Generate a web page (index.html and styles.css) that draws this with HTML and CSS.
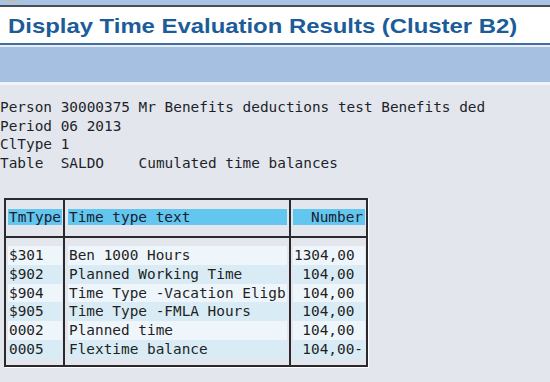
FILE: index.html
```html
<!DOCTYPE html>
<html>
<head>
<meta charset="utf-8">
<link rel="stylesheet" href="styles.css">
</head>
<body>
<div class="topband"><span class="mark"></span></div>
<div class="darkline"></div>
<div class="titlebar"><h1 class="title">Display Time Evaluation Results (Cluster B2)</h1></div>
<div class="blueline"></div>
<div class="whiteline"></div>
<div class="toolbar"></div>
<div class="lightline"></div>
<div class="content">
  <div class="info">
    <div class="line">Person 30000375 Mr Benefits deductions test Benefits ded</div>
    <div class="line">Period 06 2013</div>
    <div class="line">ClType 1</div>
    <div class="line">Table  SALDO    Cumulated time balances</div>
  </div>
  <div class="tbl">
    <div class="col col1">
      <div class="head"><span class="hl">TmType</span></div>
      <div class="body">
        <div class="cell odd">$301</div>
        <div class="cell even">$902</div>
        <div class="cell odd">$904</div>
        <div class="cell even">$905</div>
        <div class="cell odd">0002</div>
        <div class="cell even">0005</div>
      </div>
    </div>
    <div class="col col2">
      <div class="head"><span class="hl">Time type text</span></div>
      <div class="body">
        <div class="cell odd">Ben 1000 Hours</div>
        <div class="cell even">Planned Working Time</div>
        <div class="cell odd">Time Type -Vacation Eligb</div>
        <div class="cell even">Time Type -FMLA Hours</div>
        <div class="cell odd">Planned time</div>
        <div class="cell even">Flextime balance</div>
      </div>
    </div>
    <div class="col col3">
      <div class="head"><span class="hl num">Number</span></div>
      <div class="body">
        <div class="cell odd num">1304,00 </div>
        <div class="cell even num">104,00 </div>
        <div class="cell odd num">104,00 </div>
        <div class="cell even num">104,00 </div>
        <div class="cell odd num">104,00 </div>
        <div class="cell even num">104,00-</div>
      </div>
    </div>
  </div>
</div>
</body>
</html>
```

FILE: styles.css
```css
* { box-sizing: border-box; }
html, body {
  margin: 0;
  padding: 0;
  width: 550px;
  height: 382px;
  overflow: hidden;
  background: #e3e7ed;
}
.topband {
  height: 5px;
  background: #a9c3e4;
  position: relative;
}
.mark {
  position: absolute;
  left: 5px;
  top: 0;
  width: 13px;
  height: 1px;
  background: #d6b48f;
}
.darkline {
  height: 2px;
  background: #4a4d52;
}
.titlebar {
  height: 36px;
  background: #ffffff;
  padding-left: 8px;
  display: flex;
  align-items: center;
}
.title {
  margin: 0;
  font-family: "Liberation Sans", Arial, sans-serif;
  font-weight: bold;
  font-size: 20.5px;
  color: #1b5c99;
  white-space: nowrap;
  transform: scaleX(1.165);
  transform-origin: left center;
  position: relative;
  top: 1px;
}
.blueline {
  height: 2px;
  background: #3f6ea6;
}
.whiteline {
  height: 2px;
  background: #e9eef5;
}
.toolbar {
  height: 35px;
  background: #a6c0e2;
}
.lightline {
  height: 3px;
  background: #f1f3f6;
}
.content {
  padding-top: 13px;
  font-family: "DejaVu Sans Mono", monospace;
  font-size: 14.4px;
  color: #1d1f2b;
}
.line {
  height: 18.6px;
  line-height: 18.6px;
  white-space: pre;
}
.tbl {
  margin-top: 26px;
  margin-left: 4px;
  display: inline-flex;
  border: 2px solid #2a2a2e;
  box-shadow: 1px 1px 0 #ffffff;
}
.col {
  display: flex;
  flex-direction: column;
}
.col1 { width: 59px; border-right: 2px solid #2a2a2e; }
.col2 { width: 226px; border-right: 2px solid #2a2a2e; }
.col3 { width: 75px; }
.head {
  height: 38px;
  padding-top: 9px;
  border-bottom: 2px solid #2a2a2e;
}
.hl {
  display: block;
  height: 16px;
  line-height: 16px;
  background: #62c6ee;
  white-space: pre;
  color: #1b2030;
}
.col1 .head, .col1 .body { padding-left: 2px; padding-right: 1px; }
.col2 .head, .col2 .body { padding-left: 3px; padding-right: 2px; }
.col3 .head, .col3 .body { padding-left: 2px; padding-right: 1px; }
.col1 .hl { padding-left: 1px; }
.col2 .hl { padding-left: 1px; }
.num { text-align: right; padding-right: 2px; }
.body {
  padding-top: 7.6px;
  padding-bottom: 6.6px;
}
.cell {
  height: 18.8px;
  line-height: 18.8px;
  white-space: pre;
  padding-left: 1px;
  color: #231f1f;
}
.cell.num { padding-right: 2px; }
.odd { background: #eef6fc; }
.even { background: #d9ecf5; }
```
